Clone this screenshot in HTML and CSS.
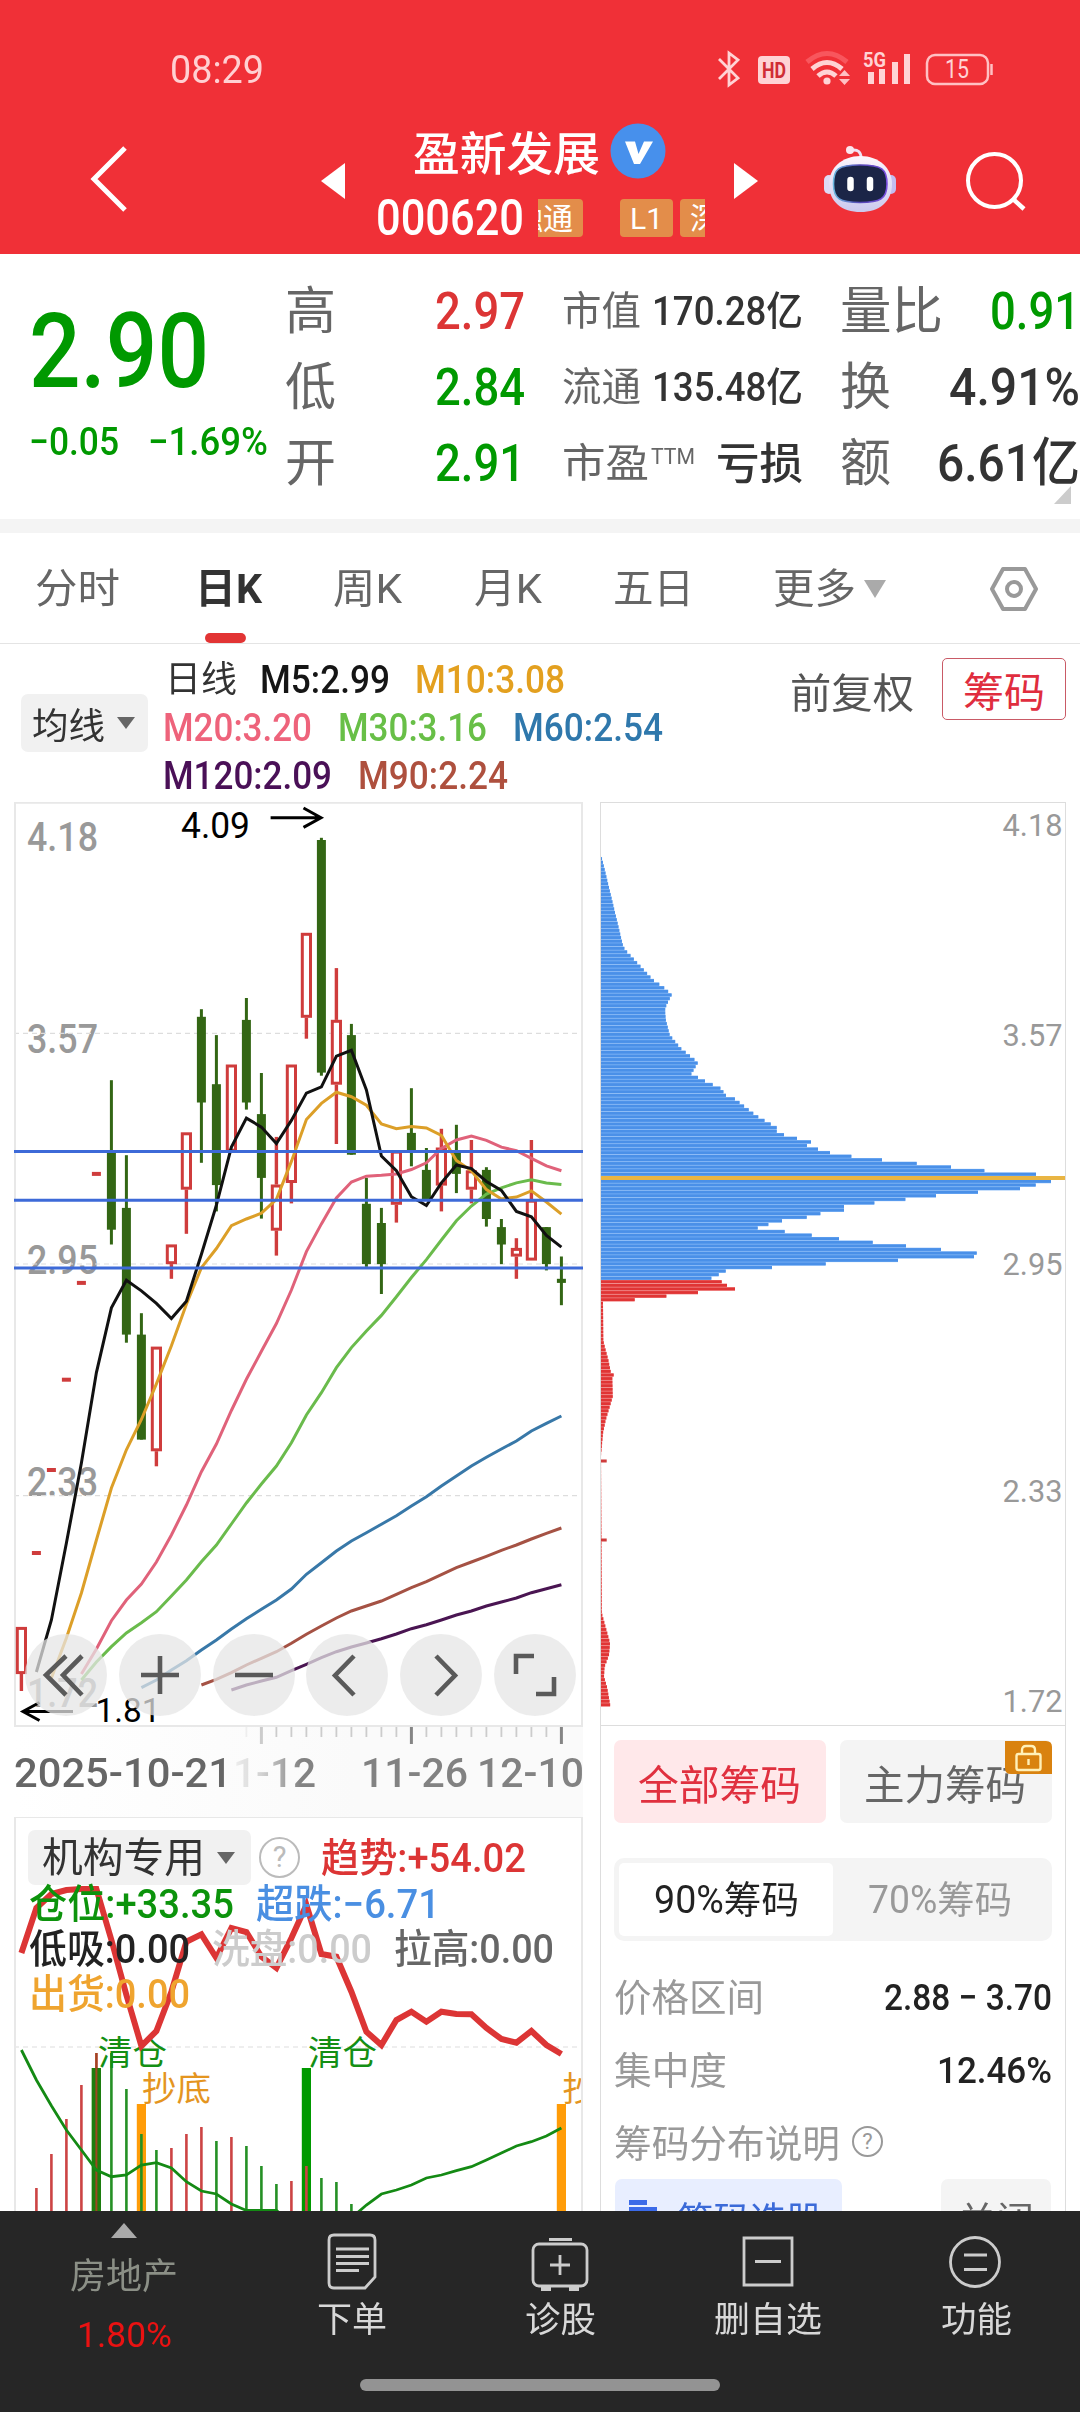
FILE: index.html
```html
<!DOCTYPE html>
<html lang="zh-CN">
<head>
<meta charset="utf-8">
<title>盈新发展 000620</title>
<link rel="stylesheet" href="styles.css">
</head>
<body>
<header class="top">
  <div class="status">
    <span class="clock" data-w="94">08:29</span>
    <svg class="status-icons" width="280" height="40" viewBox="714 50 280 40" fill="none">
      <path d="M719 59L738 78L729 85V53L738 60L719 79" stroke="#ffd3d5" stroke-width="2.8"/>
      <rect x="758" y="56" width="32" height="28" rx="4" fill="#ffd3d5"/>
      <text x="762" y="78" textLength="24" lengthAdjust="spacingAndGlyphs" font-size="22" font-weight="700" fill="#d02d35">HD</text>
      <path d="M807 62Q827 45 847 62" stroke="#f8565d" stroke-width="5"/>
      <path d="M812 69Q827 56 842 69M818 76Q827 68 836 76" stroke="#ffd3d5" stroke-width="5"/>
      <circle cx="827" cy="81" r="3.6" fill="#ffd3d5"/>
      <path d="M839 76l5.500-6 5.500 6zM839 79l5.500 6 5.500-6z" fill="#ffc0c3"/>
      <text x="863" y="67" textLength="23" lengthAdjust="spacingAndGlyphs" font-size="21" font-weight="700" fill="#ffd3d5">5G</text>
      <path d="M871 72v12M882 69v15M895 62v22M907 54v30" stroke="#ffd3d5" stroke-width="6"/>
      <rect x="927" y="55" width="61" height="29" rx="8" stroke="#ffc0c3" stroke-width="2.500"/>
      <path d="M991.500 64v11" stroke="#ffc0c3" stroke-width="2.500"/>
      <text x="945" y="78" textLength="24" lengthAdjust="spacingAndGlyphs" font-size="25" fill="#ffd3d5">15</text>
    </svg>
  </div>
  <nav class="nav">
    <svg class="back" width="42" height="70" viewBox="0 0 42 70" fill="none"><path d="M37 2L6 33L37 64" stroke="#fff" stroke-width="5"/></svg>
    <svg class="prev" width="24" height="36" viewBox="0 0 24 36"><path d="M0 18L24 0V36z" fill="#fff"/></svg>
    <div class="title">
      <div class="title-name"><span data-w="187">盈新发展</span>
        <svg width="56" height="56" viewBox="0 0 56 56" fill="none"><circle cx="28" cy="28" r="27.500" fill="#4790ec"/><path d="M15 18.500H25L28.500 31L34 18.500H43L30 41H24z" fill="#fff"/></svg>
      </div>
      <div class="title-code"><span data-w="148">000620</span>
        <div class="tags"><span class="tag tag-link">融通</span><span class="tag tag-level">L1</span><span class="tag">深</span></div>
      </div>
    </div>
    <svg class="next" width="24" height="36" viewBox="0 0 24 36"><path d="M24 18L0 0V36z" fill="#fff"/></svg>
    <svg class="robot" width="78" height="78" viewBox="822 142 78 78" fill="none">
      <defs><linearGradient id="shell" x2="0" y2="1"><stop offset="0" stop-color="#fdf6fc"/><stop offset="1" stop-color="#cbc9ee"/></linearGradient><linearGradient id="rim"><stop offset="0" stop-color="#6cb7e0"/><stop offset=".5" stop-color="#5546b4"/><stop offset="1" stop-color="#7a4fe0"/></linearGradient></defs>
      <path d="M862 158Q862 149 853 150" stroke="#efe2f4" stroke-width="3"/><circle cx="851" cy="150" r="4" fill="#fbe6ee"/>
      <rect x="825" y="175" width="10" height="19" rx="5" fill="#dedaf5"/><rect x="887" y="175" width="10" height="19" rx="5" fill="#c3bdf0"/>
      <path d="M861.500 156C880 156 893 168 893 184C893 202 880 212 861.500 212C843 212 830 202 830 184C830 168 843 156 861.500 156z" fill="url(#shell)"/>
      <path d="M861 165C883 165 888 169 888 184C888 199 881 202.500 861 202.500C841 202.500 834.500 199 834.500 184C834.500 169 839 165 861 165z" fill="#1b2547" stroke="url(#rim)" stroke-width="1.600"/>
      <path d="M851.500 180v8M871 180v8" stroke="#fff" stroke-width="6.500" stroke-linecap="round"/>
    </svg>
    <svg class="search" width="64" height="64" viewBox="0 0 64 64" fill="none"><circle cx="30.500" cy="31.500" r="26.500" stroke="#fff" stroke-width="4"/><path d="M49 50L60 60" stroke="#fff" stroke-width="4.500"/></svg>
  </nav>
</header>

<section class="quote">
  <div class="price">
    <div class="last"><span data-w="180">2.90</span></div>
    <div class="change"><span data-w="90">−0.05</span><span data-w="120">−1.69%</span></div>
  </div>
  <div class="stats">
    <div class="stat"><b>高</b><i class="up" data-w="90">2.97</i></div>
    <div class="stat mid"><b data-w="79">市值</b><i data-w="151">170.28亿</i></div>
    <div class="stat"><b data-w="103">量比</b><i class="down" data-w="90">0.91</i></div>
    <div class="stat"><b>低</b><i class="down" data-w="90">2.84</i></div>
    <div class="stat mid"><b data-w="79">流通</b><i data-w="151">135.48亿</i></div>
    <div class="stat"><b>换</b><i data-w="131">4.91%</i></div>
    <div class="stat"><b>开</b><i class="down" data-w="90">2.91</i></div>
    <div class="stat mid pe"><b data-w="87">市盈</b><sup data-w="44">TTM</sup><i data-w="87">亏损</i></div>
    <div class="stat"><b>额</b><i data-w="143">6.61亿</i></div>
  </div>
  <svg class="expand-mark" width="17" height="18" viewBox="0 0 17 18"><path d="M17 0V18H0z" fill="#ccc"/></svg>
</section>

<nav class="periods">
  <span data-w="85">分时</span>
  <span class="active" data-w="67">日K</span>
  <span data-w="69">周K</span>
  <span data-w="68">月K</span>
  <span data-w="81">五日</span>
  <span data-w="83">更多</span>
  <svg class="caret" width="22" height="18" viewBox="0 0 22 18"><path d="M0 0H22L11 18z" fill="#aaa"/></svg>
  <svg class="hex" width="50" height="50" viewBox="0 0 50 50" fill="none" stroke="#999" stroke-width="4"><path d="M14 5H36L47 25L36 45H14L3 25z" stroke-linejoin="round"/><circle cx="25" cy="25" r="7"/></svg>
</nav>

<section class="ma">
  <button class="chip ma-chip"><span data-w="73">均线</span><svg width="18" height="12" viewBox="0 0 18 12"><path d="M0 0H18L9 12z" fill="#666"/></svg></button>
  <div class="ma-rows">
    <div><span class="c-text" data-w="72">日线</span><span class="c-m5" data-w="130">M5:2.99</span><span class="c-m10" data-w="150">M10:3.08</span></div>
    <div><span class="c-m20" data-w="149">M20:3.20</span><span class="c-m30" data-w="149">M30:3.16</span><span class="c-m60" data-w="150">M60:2.54</span></div>
    <div><span class="c-m120" data-w="169">M120:2.09</span><span class="c-m90" data-w="150">M90:2.24</span></div>
  </div>
  <span class="adjust" data-w="124">前复权</span>
  <button class="chip-toggle"><span data-w="82">筹码</span></button>
</section>

<main class="board">
  <div class="left">
    <div class="kline">
      <svg id="kline" width="569" height="925" viewBox="14 802 569 925"></svg>
      <div class="tools">
        <button><svg viewBox="-41 -41 82 82"><path d="M0-19L-20 0L0 20M16-19L-3 0L16 20"/></svg></button>
        <button><svg viewBox="-41 -41 82 82"><path d="M-19 0H19M0-19V19"/></svg></button>
        <button><svg viewBox="-41 -41 82 82"><path d="M-19 0H19"/></svg></button>
        <button><svg viewBox="-41 -41 82 82"><path d="M7-19L-12 .500L7 20"/></svg></button>
        <button><svg viewBox="-41 -41 82 82"><path d="M-5-19L14 .500L-5 20"/></svg></button>
        <button><svg viewBox="-41 -41 82 82"><path d="M-1-19H-19V-1M1 19H19V2"/></svg></button>
      </div>
    </div>
    <div class="axis">
      <svg id="ticks" width="569" height="18" viewBox="14 1727 569 18"></svg>
      <div class="dates"><span class="d-start" data-w="218">2025-10-21</span><span class="d-faded" data-w="106">11-12</span><span data-w="107">11-26</span><span data-w="107">12-10</span></div>
    </div>
    <div class="sub">
      <svg id="sub" class="sub-plot" width="569" height="394" viewBox="14 1817 569 394"></svg>
      <div class="sub-legend">
        <div class="sub-head"><button class="chip sub-chip"><span data-w="163">机构专用</span><svg width="18" height="12" viewBox="0 0 18 12"><path d="M0 0H18L9 12z" fill="#666"/></svg></button><span class="help">?</span><span class="c-red" data-w="205">趋势:+54.02</span></div>
        <div><span class="c-green" data-w="205">仓位:+33.35</span><span class="c-blue" data-w="184">超跌:−6.71</span></div>
        <div><span class="c-dark" data-w="161">低吸:0.00</span><span class="c-pale" data-w="160">洗盘:0.00</span><span class="c-grey" data-w="160">拉高:0.00</span></div>
        <div><span class="c-amber" data-w="161">出货:0.00</span></div>
      </div>
    </div>
  </div>

  <aside class="right">
    <svg id="chips" width="464" height="922" viewBox="601 803 464 922"></svg>
    <div class="panel">
      <div class="scope"><button class="on"><span data-w="163">全部筹码</span></button><button><span data-w="162">主力筹码</span>
        <svg class="lock" width="47" height="33" viewBox="0 0 47 33" fill="none"><path d="M0 0H41Q47 0 47 6V33H6Q0 33 0 27z" fill="#d9820f"/><g stroke="#fff0b8" stroke-width="2.400"><rect x="11.500" y="13" width="24" height="16" rx="2"/><path d="M17 13V9Q17 5 21 5H26Q30 5 30 9V13M23.500 18v6"/></g></svg></button></div>
      <div class="segment"><span class="sel"><span data-w="145">90%筹码</span></span><span><span data-w="144">70%筹码</span></span></div>
      <div class="row"><span data-w="150">价格区间</span><strong data-w="168">2.88 − 3.70</strong></div>
      <div class="row"><span data-w="113">集中度</span><strong data-w="115">12.46%</strong></div>
      <div class="row"><span data-w="226">筹码分布说明</span><span class="help small">?</span></div>
      <div class="actions"><button class="pick"><svg width="29" height="42" viewBox="0 0 29 42"><path d="M0 2h18v5H0zM0 9h28v5H0zM0 23h28v5H0zM0 30h18v5H0z" fill="#3b6ae8"/></svg><span data-w="146">筹码选股</span></button><button class="close"><span data-w="76">关闭</span></button></div>
    </div>
  </aside>
</main>

<footer class="bar">
  <div class="tab sector"><svg width="26" height="15" viewBox="0 0 26 15"><path d="M13 0L26 15H0z" fill="#aaa"/></svg><span class="name" data-w="108">房地产</span><span class="pct" data-w="95">1.80%</span></div>
  <div class="tab"><svg viewBox="0 0 60 60"><path d="M12 4H48Q53 4 53 9V46L43 57H12Q7 57 7 52V9Q7 4 12 4z"/><path d="M14 18H47M14 25.500H47M14 32.500H47M14 39.500H37"/></svg><span data-w="70">下单</span></div>
  <div class="tab"><svg viewBox="0 0 60 60"><rect x="3" y="13" width="54" height="42" rx="6"/><path d="M19 8.500H42M30 24V44M20 34H40"/><path d="M11 57.500H21M39 57.500H49" stroke-width="5"/></svg><span data-w="71">诊股</span></div>
  <div class="tab"><svg viewBox="0 0 60 60"><path d="M6 7H54V54H6zM17 30.500H43"/></svg><span data-w="108">删自选</span></div>
  <div class="tab"><svg viewBox="0 0 60 60"><circle cx="29" cy="31" r="24.500"/><path d="M18 24H41M18 38.500H41"/></svg><span data-w="71">功能</span></div>
  <div class="home"></div>
</footer>
<script src="charts.js"></script>
</body>
</html>
```

FILE: styles.css
```css
* { box-sizing: border-box; }
body { margin: 0; width: 1080px; height: 2412px; overflow: hidden; background: #fff; color: #333; font-family: Roboto, "Noto Sans CJK SC", sans-serif; }
button { border: 0; padding: 0; margin: 0; font: inherit; color: inherit; background: none; }
svg { display: block; flex: none; }
[data-w] { display: block; flex: none; white-space: nowrap; transform-origin: 0 50%; text-align: left; }
text { font-family: Roboto, "Noto Sans CJK SC", sans-serif; }

.top { height: 254px; background: #f03037; color: #fff; }
.status { height: 118px; padding: 21px 86px 0 170px; display: flex; align-items: center; justify-content: space-between; }
.clock { font-size: 38px; line-height: 48px; color: #ffd0d2; }
.nav { height: 136px; padding: 0 52px 10px 88px; display: flex; align-items: center; }
.prev { margin-left: 191px; }
.title { align-self: flex-start; width: 332px; margin: 1px 27px 0 30px; }
.title-name { height: 66px; padding-left: 38px; display: flex; align-items: center; gap: 10px; font-size: 46px; font-weight: 500; line-height: 60px; }
.title-name span { margin-top: 3px; }
.title-name svg { margin-bottom: 3px; }
.title-code { height: 66px; padding-left: 1px; display: flex; align-items: center; gap: 14px; font-size: 50px; font-weight: 500; line-height: 60px; }
.tags { width: 167px; height: 38px; overflow: hidden; display: flex; justify-content: flex-start; font-size: 30px; font-weight: 400; }
.tag { flex: none; height: 38px; line-height: 39px; padding: 0 10px; border-radius: 4px; background: #e38d4a; }
.tag-link { margin-left: -35px; }
.tag-level { margin: 0 7px 0 37px; padding: 0 10px; width: 53px; }
.robot { margin-left: 63px; }
.search { margin-left: 65px; }

.quote { position: relative; height: 279px; padding-top: 20px; display: flex; border-bottom: 14px solid #f4f4f4; }
.price { width: 285px; flex: none; color: #090; font-weight: 500; padding-left: 29px; }
.last { margin-top: 18px; font-size: 104px; line-height: 120px; font-weight: 500; }
.change { display: flex; gap: 29px; margin-top: 5px; font-size: 39px; line-height: 50px; }
.stats { display: grid; grid-template-columns: 240px 241px 240px; column-gap: 37px; grid-auto-rows: 76px; }
.stat { display: flex; align-items: center; justify-content: space-between; font-size: 52px; line-height: 76px; }
.stat b { font-weight: 400; color: #666; font-size: 51px; }
.stat i { font-style: normal; font-weight: 500; }
.stat.mid, .stat.mid b { font-size: 40px; }
.pe sup { font-size: 22px; line-height: 22px; color: #666; margin-bottom: 14px; margin-right: 20px; }
.stat.pe { font-size: 43px; }
.stat .up { color: #dc3535; }
.stat .down { color: #090; }
.expand-mark { position: absolute; right: 9px; bottom: 15px; }

.periods { height: 111px; padding-top: 2px; border-bottom: 1px solid #e4e4e4; display: flex; align-items: center; padding-left: 35px; font-size: 41px; line-height: 107px; color: #666; }
.periods .active { color: #333; font-weight: 700; margin-left: 75px; position: relative; }
.periods .active::after { content: ""; position: absolute; left: 10px; bottom: 0; width: 41px; height: 10px; border-radius: 5px; background: #e23434; }
.periods span:nth-child(3) { margin-left: 71px; }
.periods span:nth-child(4) { margin-left: 72px; }
.periods span:nth-child(5) { margin-left: 71px; }
.periods span:nth-child(6) { margin-left: 79px; }
.caret { margin-left: 8px; }
.hex { margin-left: 103px; }

.ma { height: 158px; display: flex; align-items: flex-start; font-size: 38px; }
.chip { display: flex; align-items: center; background: #f1f1f1; border-radius: 7px; color: #333; }
.ma-chip { margin: 50px 0 0 21px; width: 127px; height: 58px; padding-left: 11px; gap: 12px; font-size: 36px; }
.ma-rows { margin: 12px 0 0 15px; width: 520px; font-weight: 500; }
.ma-rows > div { display: flex; gap: 26px; height: 48px; line-height: 48px; }
.ma-rows > div:first-child { gap: 25px; }
.c-text { font-size: 36px; font-weight: 400; padding-left: 2px; }
.c-m5 { color: #151515; } .c-m10 { color: #e3a01f; } .c-m20 { color: #ee637b; } .c-m30 { color: #68bf47; }
.c-m60 { color: #2f78ac; } .c-m120 { color: #4a1057; } .c-m90 { color: #ae503e; }
.adjust { margin: 26px 0 0 107px; font-size: 41px; line-height: 48px; color: #555; }
.chip-toggle { margin: 14px 0 0 28px; width: 124px; height: 62px; display: flex; align-items: center; justify-content: center; border: 1.5px solid #c95a66; border-radius: 5px; font-size: 41px; color: #e02d3e; }

.board { height: 1409px; padding-left: 14px; display: flex; overflow: hidden; }
.left { width: 569px; flex: none; }
.kline { position: relative; height: 925px; }
.tools { position: absolute; left: 11px; bottom: 11px; display: flex; gap: 11.800px; }
.tools button { width: 82px; height: 82px; border-radius: 50%; background: rgba(229, 229, 229, .74); }
.tools path { fill: none; stroke: #5a5a5a; stroke-width: 4.600; }
.axis { height: 90px; background: linear-gradient(90deg, #fff 0, #fafafa 60%); }
.dates { display: flex; margin-top: 4px; line-height: 49px; font-size: 40px; font-weight: 500; color: #828282; }
.d-start { color: #666; z-index: 1; }
.d-faded { margin: 0 45px 0 -22px; -webkit-mask-image: linear-gradient(90deg, transparent 22%, #0002 25%, #0005 48%, #000 85%); mask-image: linear-gradient(90deg, transparent 22%, #0002 25%, #0005 48%, #000 85%); }
.dates span:nth-child(4) { margin-left: 9px; }
.sub { position: relative; height: 394px; overflow: hidden; }
.sub-legend { position: absolute; left: 14px; top: 13px; font-size: 40px; font-weight: 500; color: #333; }
.sub-legend > div { display: flex; height: 45px; line-height: 47px; gap: 22px; padding-left: 1px; }
.sub-legend .sub-head { height: 51px; gap: 0; padding: 0; align-items: flex-start; line-height: 58px; }
.sub-chip { width: 223px; height: 55px; padding-left: 14px; gap: 12px; font-weight: 400; font-size: 41px; }
.help { width: 41px; height: 41px; margin: 7px 21px 0 8px; border: 2.500px solid #bbb; border-radius: 50%; font-size: 29px; line-height: 36px; text-align: center; color: #bbb; font-weight: 400; }
.c-red { color: #dc3535; } .c-green { color: #0c930c; } .c-blue { color: #4a8fe2; } .c-dark { color: #222; }
.c-pale { color: #ccc; } .c-grey { color: #666; } .c-amber { color: #efa42f; }

.right { margin-left: 17px; width: 466px; flex: none; border: 1px solid #ddd; border-bottom: 0; }
.panel { border-top: 1px solid #ddd; padding: 14px 13px 0; }
.scope { display: flex; gap: 14px; }
.scope button { position: relative; width: 212px; height: 83px; display: flex; justify-content: center; align-items: center; border-radius: 7px; background: #f4f4f4; color: #666; font-size: 41px; padding-right: 2px; }
.scope .on { background: #ffe8ea; color: #e0303f; }
.lock { position: absolute; right: 0; top: 1px; }
.segment { margin: 35px 0 20px; height: 83px; padding: 5px; display: flex; background: #f4f4f4; border-radius: 10px; font-size: 38px; line-height: 74px; color: #999; }
.segment > span { flex: 1; display: flex; justify-content: center; }
.segment .sel { background: #fff; border-radius: 5px; color: #222; }
.row { height: 73px; display: flex; justify-content: space-between; align-items: center; font-size: 38px; line-height: 60px; color: #999; }
.row strong { font-size: 37px; font-weight: 500; color: #222; }
.small { width: 31px; height: 31px; margin: 0 auto 5px 12px; border-color: #999; color: #999; font-size: 22px; line-height: 27px; }
.actions { display: flex; justify-content: space-between; margin-top: -1px; padding: 0 1px; font-size: 37px; }
.actions button { height: 80px; border-radius: 7px; display: flex; align-items: center; }
.pick { width: 227px; padding-left: 14px; gap: 19px; background: #e8eeff; color: #3b6ad8; }
.pick span, .close span { margin-top: -3px; }
.close { width: 110px; justify-content: center; background: #f4f4f4; color: #666; }

.bar { position: relative; height: 201px; background: #262626; display: grid; grid-template-columns: 248px repeat(4, 208px); color: #d8d8d8; font-size: 35px; }
.tab { display: flex; flex-direction: column; align-items: center; padding-top: 20px; line-height: 50px; }
.tab > svg { width: 60px; height: 60px; fill: none; stroke: #ccc; stroke-width: 2.800; }
.tab span { margin-top: 5px; }
.sector { padding-top: 12px; }
.sector > svg { width: 26px; height: 15px; stroke: none; }
.tab .name { margin-top: 14px; font-size: 36px; color: #8b8f86; }
.tab .pct { margin-top: 9px; color: #ea1212; }
.home { position: absolute; left: 360px; bottom: 21px; width: 360px; height: 12px; border-radius: 6px; background: #939393; }
```

FILE: charts.js
```js
const NS = 'http://www.w3.org/2000/svg';
function add(svg, tag, attrs, text) {
  const el = document.createElementNS(NS, tag);
  for (const k in attrs) el.setAttribute(k, attrs[k]);
  if (text) el.textContent = text;
  svg.appendChild(el);
  return el;
}
const X = i => 21.4 + 15 * i;
const label = (svg, x, mid, w, size, fill, weight, s) => add(svg, 'text', {
  x, y: mid + size * 0.355, textLength: w, lengthAdjust: 'spacingAndGlyphs', 'font-size': size, fill, 'font-weight': weight
}, s);
const line = (svg, start, ys, color, width) => add(svg, 'polyline', {
  points: ys.map((y, k) => X(start + k).toFixed(1) + ',' + y).join(' '), fill: 'none', stroke: color, 'stroke-width': width
});

document.querySelectorAll('[data-w]').forEach(el => {
  const w = +el.dataset.w, r = document.createRange();
  r.selectNodeContents(el);
  const n = r.getBoundingClientRect().width;
  el.style.width = w + 'px';
  el.style.transform = 'scaleX(' + (w / n).toFixed(4) + ')';
});

// Daily candles
const k = document.getElementById('kline');
[[4.18, 836.5], [3.57, 1038.7], [2.95, 1260], [2.33, 1481.6], [1.72, 1693]].forEach(([p, y]) => label(k, 27, y, 71, 40, '#999', 500, p.toFixed(2)));
[1033.3, 1264, 1495.7].forEach(y => add(k, 'path', { d: `M14 ${y}H583`, stroke: '#ddd', 'stroke-width': 1.2, 'stroke-dasharray': '5 4' }));
add(k, 'rect', { x: 15, y: 802.75, width: 567, height: 923.25, fill: 'none', stroke: '#e8e8e8', 'stroke-width': 2 });

// [type, body top, body bottom, wick top, wick bottom]
const candles = [
  ['r', 1627, 1674, 0, 1691], ['d', 1553], ['d', 1470], ['d', 1379.7], ['d', 1282.9], ['d', 1173.9],
  ['g', 1151.6, 1229.7, 1080.2, 1244.5], ['g', 1207.9, 1334.6, 1155.2, 1342.7], ['g', 1334.6, 1439.6, 1313.2, 1439.6],
  ['r', 1346.7, 1451.2, 0, 1466.3], ['r', 1244.5, 1264.1, 0, 1278.8], ['r', 1132.4, 1189.6, 0, 1233.8],
  ['g', 1016.8, 1102.5, 1009.2, 1162.8], ['g', 1084.2, 1185.1, 1035.1, 1211.4], ['r', 1064.6, 1151.6, 0, 0],
  ['g', 1019.9, 1102.5, 998, 1109.6], ['g', 1114.1, 1177.9, 1073, 1218.6], ['r', 1184.6, 1230.6, 1136.9, 1255.6],
  ['r', 1064.6, 1182.9, 0, 1203.4], ['r', 932.9, 1017.7, 0, 1038.7], ['g', 840, 1072.6, 837.8, 1075.7],
  ['r', 1019.9, 1084.6, 968.1, 1144], ['g', 1035.1, 1154.7, 1023.9, 1154.7], ['g', 1203.8, 1264.1, 1177.9, 1266.8],
  ['g', 1223, 1264.1, 1207.9, 1294], ['r', 1150.7, 1204.7, 0, 1222.6], ['g', 1132.9, 1151.6, 1088.2, 1166.3],
  ['g', 1169.9, 1200.7, 1148, 1200.7], ['r', 1147.6, 1185.5, 1128.8, 1211.4], ['g', 1151.6, 1173.9, 1124.8, 1193.1],
  ['r', 1170.4, 1189.6, 1140, 1203.4], ['g', 1169.9, 1219, 1167.2, 1226.6], ['g', 1227.1, 1244.5, 1219, 1264.1],
  ['r', 1248, 1256.5, 1238.2, 1278.8], ['r', 1199.8, 1260.5, 1140, 0], ['g', 1227.1, 1264.1, 1227.1, 1270.4],
  ['g', 1278.8, 1282.9, 1256.5, 1305.2]
];
candles.forEach(([t, a, b, hi, lo], i) => {
  const x = X(i);
  if (t === 'd') add(k, 'rect', { x: x - 4.5, y: a - 2, width: 9, height: 4, fill: '#cf3c3c' });
  if (t === 'g') {
    add(k, 'rect', { x: x - 1.5, y: hi, width: 3, height: lo - hi, fill: '#336614' });
    add(k, 'rect', { x: x - 4.5, y: a, width: 9, height: b - a, fill: '#336614' });
  }
  if (t === 'r') {
    add(k, 'rect', { x: x - 4.1, y: a + 1.4, width: 8.2, height: b - a - 2.8, fill: '#fff', stroke: '#cf3c3c', 'stroke-width': 3 });
    if (hi) add(k, 'rect', { x: x - 1.7, y: hi, width: 3.4, height: a - hi, fill: '#cf3c3c' });
    if (lo) add(k, 'rect', { x: x - 1.7, y: b, width: 3.4, height: lo - b, fill: '#cf3c3c' });
  }
});

line(k, 14, [1690, 1685, 1681, 1677.3, 1670.7, 1664.3, 1657.7, 1651.7, 1647, 1643, 1638.7, 1634, 1628.7, 1624.7, 1620, 1615, 1611, 1606, 1602, 1598, 1592.7, 1588.7, 1584.7], '#4a1552', 3);
line(k, 12, [1685, 1679.3, 1672.7, 1665, 1658.3, 1651.7, 1643.3, 1634.3, 1626, 1618, 1611, 1606, 1601, 1594.3, 1587.7, 1581.7, 1574.7, 1567.7, 1562, 1556.3, 1550.3, 1545, 1539, 1533.3, 1528], '#a55244', 3);
line(k, 8, [1687.7, 1680, 1670, 1660.7, 1650, 1640, 1629, 1618.7, 1609.3, 1600, 1589, 1574.3, 1562.7, 1551, 1541, 1532.7, 1524.3, 1515.7, 1506, 1496.7, 1486, 1476, 1466, 1457.3, 1449, 1441, 1431, 1423.3, 1416], '#3878a8', 3);
line(k, 4, [1680, 1662, 1646.7, 1633, 1622.7, 1611.7, 1596, 1580, 1561.7, 1545, 1524, 1503, 1484, 1466, 1442.7, 1415, 1392.7, 1367.7, 1347.6, 1331, 1315.4, 1296.7, 1277.5, 1259.6, 1240, 1220.8, 1206, 1194, 1187.8, 1182.9, 1179.7, 1182.9, 1184.6], '#6abb4c', 3);
line(k, 4, [1674, 1649, 1620.7, 1600, 1584, 1562, 1535, 1505, 1471.7, 1444, 1410.5, 1379.3, 1351.2, 1323.5, 1290, 1251.6, 1223.9, 1198, 1182, 1176.2, 1175.3, 1173.9, 1169.5, 1162.8, 1148.5, 1140, 1136, 1140.4, 1147.1, 1150.7, 1158.3, 1165.9, 1170.8], '#e0627a', 3);
line(k, 2, [1678, 1638, 1593, 1540, 1488, 1449.8, 1419.5, 1383.8, 1345.8, 1304.3, 1267.7, 1248.5, 1225.7, 1219, 1213.2, 1199.4, 1161.4, 1119.5, 1103.4, 1092.2, 1096.7, 1105.2, 1123.9, 1128.8, 1126.6, 1127.9, 1135.5, 1160.5, 1170.8, 1189.6, 1198.9, 1197.1, 1190.9, 1202, 1214.1], '#dc9f28', 3);
line(k, 1, [1672, 1620, 1543, 1463, 1372.6, 1307.9, 1280.2, 1290.9, 1303.4, 1318.6, 1301.2, 1254.3, 1205.2, 1147.1, 1118.1, 1127.1, 1143.6, 1120.4, 1093.1, 1086.9, 1056.1, 1050.3, 1090, 1156.1, 1170.8, 1196.7, 1205.6, 1182.9, 1165, 1168.6, 1181.5, 1190.4, 1211.4, 1216.8, 1235.5, 1247.1], '#111', 3);
[1151.6, 1200.3, 1268.1].forEach(y => add(k, 'path', { d: `M14 ${y}H583`, stroke: '#3d6ad8', 'stroke-width': 3 }));
label(k, 181, 825.5, 69, 36, '#000', 400, '4.09');
label(k, 95.5, 1709.5, 65, 34, '#000', 400, '1.81');
add(k, 'path', { d: 'M270.6 817.7H321M303.500 808L321 817.700L303.500 827.400M73 1711.500H23M39.500 1702.500L23 1711.500L39.500 1720.500', fill: 'none', stroke: '#000', 'stroke-width': 3 });

// Date ticks
const t = document.getElementById('ticks');
for (let i = 15; i <= 36; i++) {
  const major = (i - 16) % 10 === 0;
  add(t, 'rect', { x: X(i) - (major ? 1.5 : 0.9), y: 1727, width: major ? 3 : 1.8, height: major ? 17 : 10, fill: i < 16 ? '#eee' : i === 16 ? '#ccc' : major ? '#858585' : '#ccc' });
}

// Institution indicator
const s = document.getElementById('sub');
add(s, 'path', { d: 'M14 2047H583', stroke: '#ddd', 'stroke-width': 1.2, 'stroke-dasharray': '5 4' });
[[5, 2068, '#090'], [8, 2104, '#ff9c08'], [19, 2068, '#090'], [36, 2104, '#ff9c08']].forEach(([i, y, fill]) => add(s, 'rect', { x: X(i) - 4.6, y, width: 9.2, height: 2211 - y, fill }));
'r2188 r2154 r2119 r2085 r2053 g2053 g2089 g2134 g2150 r2148 r2134 r2127 g2141 r2137 g2146 g2166 g2184 r2181 r2166 g2178 g2182 g2204'.split(' ').forEach((v, j) => {
  const y = +v.slice(1);
  add(s, 'rect', { x: X(j + 1) - 1.3, y, width: 2.6, height: 2211 - y, fill: v[0] === 'r' ? '#cc4444' : '#259025' });
});
add(s, 'rect', { x: X(5) - 4.6, y: 2068, width: 9.2, height: 143, fill: '#1c7d0e' });
add(s, 'rect', { x: X(5) - 1, y: 2053, width: 2, height: 158, fill: '#9c4820' });
label(s, 98, 2053, 69, 34, '#148f14', 400, '清仓');
label(s, 308, 2053, 69, 34, '#148f14', 400, '清仓');
label(s, 142, 2089, 69, 34, '#e4951f', 400, '抄底');
label(s, 562.5, 2089, 69, 34, '#e4951f', 400, '抄底');
line(s, 0, [2050, 2080, 2105.7, 2130, 2150, 2170, 2176.7, 2175, 2165, 2162.7, 2168, 2181.7, 2191, 2194, 2204, 2210.5, 2210.5, 2210.5, 2222, 2228, 2232, 2230, 2218, 2205, 2194, 2190, 2185, 2178, 2175, 2170.7, 2166.7, 2160, 2153, 2146, 2141.7, 2136, 2128], '#148a14', 2.8);
line(s, 0, [1953, 1908, 1894, 1890, 1889, 1889, 1940, 1995, 2046, 2031, 1991.7, 1941.7, 1934.3, 1958, 1928, 1932, 1956.7, 1968, 1938, 1905, 1954, 1956.7, 1991.7, 2031.7, 2045, 2020, 2011.7, 2021.7, 2011.7, 2014, 2014.3, 2028, 2039, 2042.7, 2031, 2045, 2054], '#dc3535', 6);
add(s, 'path', { d: 'M15 2211V1817H582V2211', fill: 'none', stroke: '#e8e8e8', 'stroke-width': 2 });

// Cost distribution: [price-axis position, width]
const c = document.getElementById('chips');
const knots = [[857, 0.6], [947, 22.3], [951.5, 25.7], [980.2, 52.3], [987, 62.3], [994.7, 70.7], [1005.5, 65.3], [1010, 64], [1019.6, 64.7], [1035, 68.7], [1048.3, 79.7], [1062.5, 97], [1074, 90.3], [1080.9, 103.7], [1088.5, 120], [1095.4, 125], [1098.8, 133.7], [1116, 155.7], [1127.5, 175.7], [1131.4, 175.7]];
[582, 621, 663, 651, 684, 720, 784, 876, 980, 1083, 1183, 1338, 1383, 1383, 1337, 1290, 1164, 1038, 946, 853, 762, 762, 691, 650, 576, 535, 503, 584, 665, 747, 848, 948, 1053, 1160, 1152, 924, 707, 546, 407, 386, 364, 395, 411, 435, 324, 229, 134, 39].forEach((v, j) => knots.push([1281.8 + 3.585 * (j - 41), (v - 33) / 3]));
knots.push([1341, 2.3], [1349, 4.3], [1360, 7.3], [1371.7, 9.7], [1375.1, 12.7], [1378.6, 11.3], [1396.7, 11.7], [1420, 4.7], [1433, 2], [1455, 0], [1538, 0.4], [1613, 0.7], [1643, 9], [1655, 8], [1667, 3.5], [1677, 3], [1687, 6], [1707, 9.5]);
for (let y = 1281.8 - 3.585 * 118; y < 1707; y += 3.585) {
  const j = knots.findIndex(p => p[0] > y + 0.01);
  if (j < 1) continue;
  const [y0, w0] = knots[j - 1], [y1, w1] = knots[j];
  const w = w0 + (w1 - w0) * (y - y0) / (y1 - y0);
  const blue = y < 1280;
  add(c, 'rect', { x: 601, y: y - 1.8, width: w, height: 3.6, fill: blue ? '#74aef5' : '#ee7777' });
  add(c, 'rect', { x: 601, y: y - 1.4, width: w, height: 2.7, fill: blue ? '#4a90e8' : '#e03535' });
}
add(c, 'path', { d: 'M601 1461H606.700M601 1540H606.700', stroke: '#cf3c3c', 'stroke-width': 3 });
add(c, 'path', { d: 'M601 1178H1065', stroke: '#e9b543', 'stroke-width': 3.8 });
[['4.18', 825], ['3.57', 1035], ['2.95', 1263.5], ['2.33', 1491], ['1.72', 1701]].forEach(([p, y]) => label(c, 1002.5, y, 60, 31, '#999', 400, p));
```
